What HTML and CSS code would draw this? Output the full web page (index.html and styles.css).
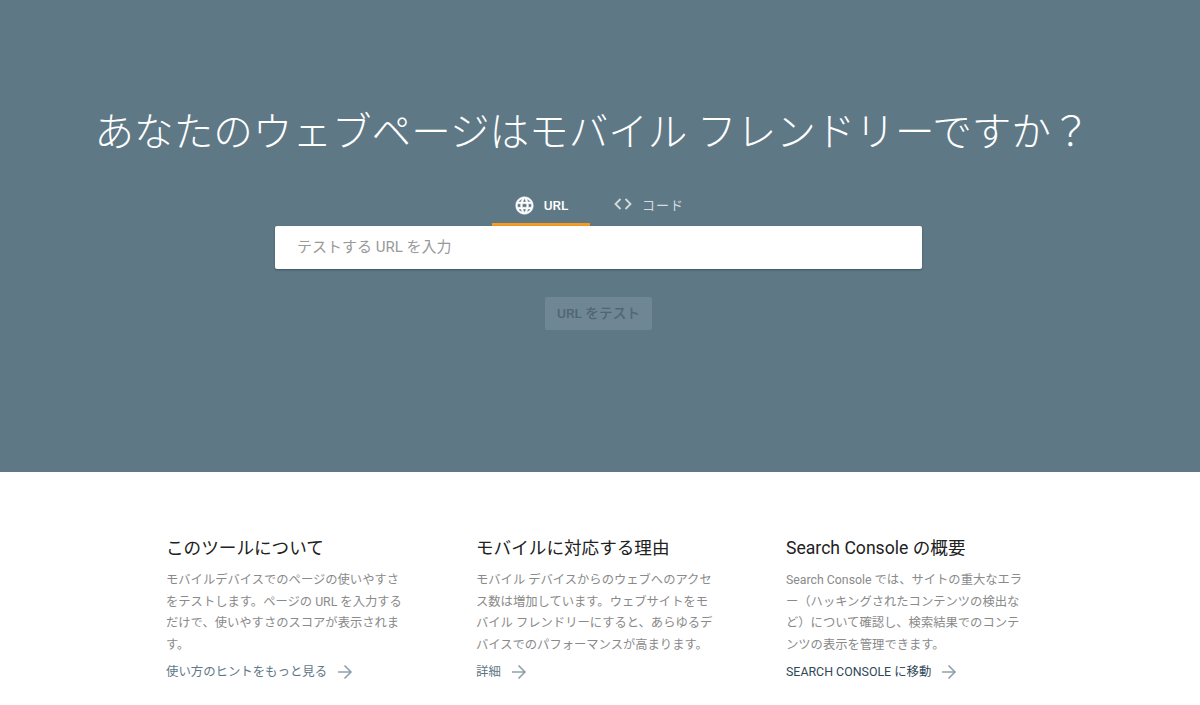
FILE: index.html
```html
<!DOCTYPE html>
<html lang="ja">

<head>
    <meta charset="UTF-8">
    <meta name="viewport" content="width=device-width, initial-scale=1.0">
    <title>モバイル フレンドリー テスト</title>
    <link rel="stylesheet" href="styles.css">
</head>

<body>

    <section class="hero">
        <h1>あなたのウェブページはモバイル フレンドリーですか？</h1>

        <div class="tabs">
            <div class="tab tab-active">
                <svg class="tab-icon" width="21" height="21" viewBox="0 0 24 24">
                    <path fill="#fff" stroke="#fff" stroke-width="0.5" d="M11.99 2C6.47 2 2 6.48 2 12s4.47 10 9.99 10C17.52 22 22 17.52 22 12S17.52 2 11.99 2zm6.93 6h-2.95c-.32-1.25-.78-2.45-1.38-3.56 1.84.63 3.37 1.91 4.33 3.56zM12 4.04c.83 1.2 1.48 2.53 1.91 3.96h-3.82c.43-1.43 1.08-2.76 1.91-3.96zM4.26 14C4.1 13.36 4 12.69 4 12s.1-1.36.26-2h3.38c-.08.66-.14 1.32-.14 2 0 .68.06 1.34.14 2H4.26zm.82 2h2.95c.32 1.25.78 2.45 1.38 3.56-1.84-.63-3.37-1.9-4.33-3.56zm2.95-8H5.08c.96-1.66 2.49-2.93 4.33-3.56C8.81 5.55 8.35 6.75 8.03 8zM12 19.96c-.83-1.2-1.48-2.53-1.91-3.96h3.82c-.43 1.43-1.08 2.76-1.91 3.96zM14.34 14H9.66c-.09-.66-.16-1.32-.16-2 0-.68.07-1.35.16-2h4.68c.09.65.16 1.32.16 2 0 .68-.07 1.34-.16 2zm.25 5.56c.6-1.11 1.06-2.31 1.38-3.56h2.95c-.96 1.65-2.49 2.93-4.33 3.56zM16.36 14c.08-.66.14-1.32.14-2 0-.68-.06-1.34-.14-2h3.38c.16.64.26 1.31.26 2s-.1 1.36-.26 2h-3.38z"/>
                </svg>
                <span>URL</span>
            </div>
            <div class="tab">
                <svg class="tab-icon" width="20" height="20" viewBox="0 0 20 20">
                    <path fill="none" stroke="#d5dcdf" stroke-width="1.8" d="M7.5 5 2.500 10l5 5M12.500 5l5 5-5 5"/>
                </svg>
                <span>コード</span>
            </div>
        </div>

        <div class="url-box">テストする URL を入力</div>

        <button class="test-btn" disabled>URL をテスト</button>
    </section>

    <section class="info">
        <div class="info-col">
            <h2>このツールについて</h2>
            <p>モバイルデバイスでのページの使いやすさをテストします。ページの URL を入力するだけで、使いやすさのスコアが表示されます。</p>
            <a class="info-link">
                使い方のヒントをもっと見る
                <svg width="16" height="16" viewBox="0 0 16 16"><path class="arrow" d="M1 8h13.500M7.500 1.500 14 8l-6.500 6.500"/></svg>
            </a>
        </div>
        <div class="info-col">
            <h2>モバイルに対応する理由</h2>
            <p>モバイル デバイスからのウェブへのアクセス数は増加しています。ウェブサイトをモバイル フレンドリーにすると、あらゆるデバイスでのパフォーマンスが高まります。</p>
            <a class="info-link">
                詳細
                <svg width="16" height="16" viewBox="0 0 16 16"><path class="arrow" d="M1 8h13.500M7.500 1.500 14 8l-6.500 6.500"/></svg>
            </a>
        </div>
        <div class="info-col">
            <h2>Search Console の概要</h2>
            <p>Search Console では、サイトの重大なエラー（ハッキングされたコンテンツの検出など）について確認し、検索結果でのコンテンツの表示を管理できます。</p>
            <a class="info-link info-link-dark">
                SEARCH CONSOLE に移動
                <svg width="16" height="16" viewBox="0 0 16 16"><path class="arrow" d="M1 8h13.500M7.500 1.500 14 8l-6.500 6.500"/></svg>
            </a>
        </div>
    </section>

</body>

</html>
```

FILE: styles.css
```css
body {
    font-family: Roboto, "Noto Sans CJK JP", sans-serif;
    background-color: #fff;
    margin: 0;
    padding: 0;
    overflow: hidden;
}

.hero {
    height: 472px;
    background-color: #5e7886;
    display: flex;
    flex-direction: column;
    align-items: center;
    box-sizing: border-box;
    padding: 106px 3px 0 0;
}

.hero h1 {
    margin: 0 12px 0 0;
    font-size: 39.6px;
    line-height: 54px;
    font-weight: 300;
    color: #fff;
    white-space: nowrap;
}

/* タブ */
.tabs {
    display: flex;
    margin-top: 24px;
    height: 42px;
    width: 647px;
    padding-left: 217px;
    box-sizing: border-box;
}

.tab {
    display: flex;
    align-items: center;
    justify-content: center;
    gap: 9px;
    height: 39px;
    box-sizing: border-box;
    font-size: 13px;
    color: #d5dcdf;
}

.tab-active {
    width: 98px;
    height: 42px;
    padding-top: 3px;
    border-bottom: 3px solid #f59a23;
    color: #fff;
    font-size: 13.5px;
    font-weight: 500;
}

.tab:not(.tab-active) {
    margin-left: 23px;
    padding-top: 1px;
    gap: 9px;
    letter-spacing: 1px;
}

.url-box {
    width: 647px;
    height: 43px;
    box-sizing: border-box;
    padding-left: 22px;
    background-color: #fff;
    border-radius: 2px;
    box-shadow: 0 1px 2px rgba(40, 60, 72, 0.6);
    font-size: 15px;
    line-height: 42px;
    color: #999;
}

.test-btn {
    margin-top: 28px;
    width: 107px;
    height: 33px;
    padding: 0 0 4px;
    border: none;
    border-radius: 2px;
    background-color: #6f8695;
    color: #4f6675;
    font-family: inherit;
    font-size: 13.7px;
    font-weight: 500;
}

/* 下の説明 */
.info {
    display: flex;
    padding: 64px 0 0 166px;
    gap: 70px;
}

.info-col {
    width: 240px;
}

.info-col h2 {
    margin: 0;
    font-size: 17.6px;
    line-height: 24px;
    font-weight: 400;
    color: #212121;
    white-space: nowrap;
}

.info-col p {
    margin: 10px 0 0;
    font-size: 12.3px;
    line-height: 21.6px;
    color: #8a8a8a;
}

.info-link {
    display: flex;
    align-items: center;
    gap: 10px;
    margin-top: 6px;
    font-size: 12.4px;
    line-height: 20px;
    color: #5e7886;
    white-space: nowrap;
}

.info-link-dark {
    color: #2f4858;
}

.arrow {
    fill: none;
    stroke: #8fa1ab;
    stroke-width: 1.6;
}
```
